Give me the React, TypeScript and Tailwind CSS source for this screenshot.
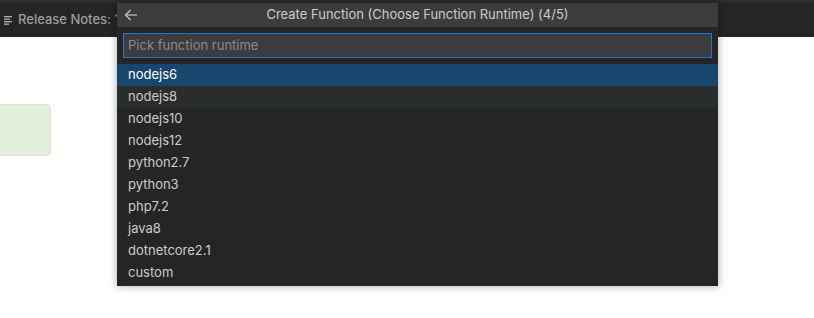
const runtimes = [
  "nodejs6",
  "nodejs8",
  "nodejs10",
  "nodejs12",
  "python2.7",
  "python3",
  "php7.2",
  "java8",
  "dotnetcore2.1",
  "custom",
];

function ListIcon() {
  return (
    <svg width="9" height="9" viewBox="0 0 9 9" fill="#b0b0b0">
      <rect x="0" y="0" width="8" height="1.3" />
      <rect x="0" y="2.5" width="6" height="1.3" />
      <rect x="0" y="5" width="8" height="1.3" />
      <rect x="0" y="7.5" width="5" height="1.3" />
    </svg>
  );
}

function BackArrow() {
  return (
    <svg width="14" height="12" viewBox="0 0 14 12" fill="none" stroke="#c5c5c5" strokeWidth="1.2">
      <path d="M13 6H1.5" />
      <path d="M6.5 1L1.5 6l5 5" />
    </svg>
  );
}

export default function App() {
  return (
    <div
      className="relative w-[814px] h-[318px] bg-white overflow-hidden"
      style={{ fontFamily: '"Inter", "Liberation Sans", sans-serif' }}
    >
      {/* editor chrome */}
      <div className="h-[3px] bg-[#2d2d2d]" />
      <div className="h-[34px] bg-[#252526] flex items-center pl-[4px] gap-[5px]">
        <ListIcon />
        <span className="text-[13px] text-[#9d9d9d] font-medium">Release Notes: 1.41</span>
      </div>
      <div className="pt-[67px]">
        <div className="w-[51px] h-[52px] bg-[#e2f0db] border border-[#d5eacb] rounded-r-[5px] border-l-0" />
      </div>

      {/* quick pick */}
      <div className="absolute left-[117px] top-[3px] w-[601px] bg-[#252526] shadow-[0_0_8px_rgba(0,0,0,0.35)]">
        <div className="relative h-[24px] bg-[#3c3c3c] flex items-center justify-center">
          <div className="absolute left-[7px] top-[6px]">
            <BackArrow />
          </div>
          <span className="text-[13px] text-[#cccccc]">Create Function (Choose Function Runtime) (4/5)</span>
        </div>
        <div className="px-[6px] pt-[6px] pb-[6px]">
          <div className="bg-[#1e78d4] p-[1px]">
            <div className="h-[23px] bg-[#3c3c3c] flex items-center px-[4px]">
              <span className="text-[13px] text-[#8b8b8b]">Pick function runtime</span>
            </div>
          </div>
        </div>
        <div className="pb-[2px]">
          {runtimes.map((r, i) => (
            <div
              key={r}
              className={
                "h-[22px] flex items-center pl-[11px] text-[13px] " +
                (i === 0
                  ? "bg-[#17466e] text-white"
                  : i === 1
                  ? "bg-[#2a2d2e] text-[#cccccc]"
                  : "text-[#cccccc]")
              }
            >
              {r}
            </div>
          ))}
        </div>
      </div>
    </div>
  );
}
